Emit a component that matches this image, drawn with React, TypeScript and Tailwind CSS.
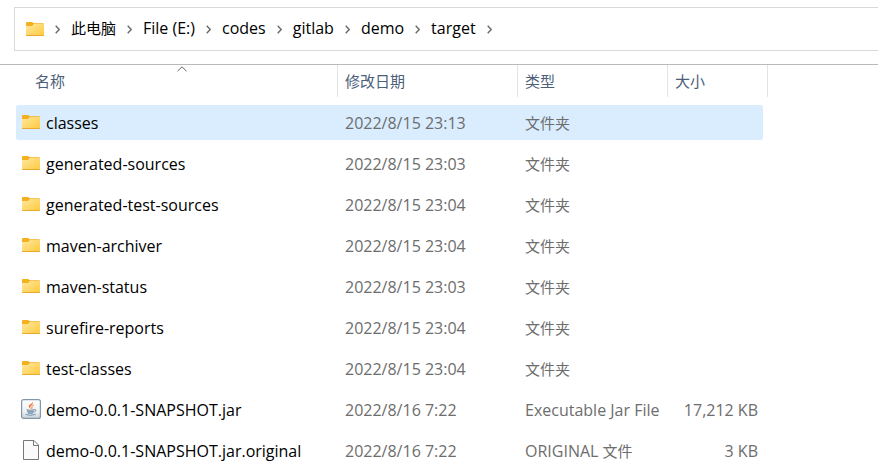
import React from "react";

type Kind = "folder" | "jar" | "file";
type Entry = { name: string; date: string; type: string; size?: string; kind: Kind; selected?: boolean };

const entries: Entry[] = [
  { name: "classes", date: "2022/8/15 23:13", type: "文件夹", kind: "folder", selected: true },
  { name: "generated-sources", date: "2022/8/15 23:03", type: "文件夹", kind: "folder" },
  { name: "generated-test-sources", date: "2022/8/15 23:04", type: "文件夹", kind: "folder" },
  { name: "maven-archiver", date: "2022/8/15 23:04", type: "文件夹", kind: "folder" },
  { name: "maven-status", date: "2022/8/15 23:03", type: "文件夹", kind: "folder" },
  { name: "surefire-reports", date: "2022/8/15 23:04", type: "文件夹", kind: "folder" },
  { name: "test-classes", date: "2022/8/15 23:04", type: "文件夹", kind: "folder" },
  { name: "demo-0.0.1-SNAPSHOT.jar", date: "2022/8/16 7:22", type: "Executable Jar File", size: "17,212 KB", kind: "jar" },
  { name: "demo-0.0.1-SNAPSHOT.jar.original", date: "2022/8/16 7:22", type: "ORIGINAL 文件", size: "3 KB", kind: "file" },
];

const crumbs = ["此电脑", "File (E:)", "codes", "gitlab", "demo", "target"];

// Chinese runs are set one pixel smaller than the Latin text beside them.
function Label({ text }: { text: string }) {
  return (
    <span className="whitespace-pre">
      {text
        .split(/([\u4e00-\u9fff]+)/)
        .filter(Boolean)
        .map((run, i) => (
          <span key={i} className={/[\u4e00-\u9fff]/.test(run) ? "text-[15px]" : "text-[16px]"}>
            {run}
          </span>
        ))}
    </span>
  );
}

function FolderIcon() {
  return (
    <svg width="18" height="14" viewBox="0 0 18 14" className="shrink-0" aria-hidden="true">
      <defs>
        <linearGradient id="folderFace" x1="0" y1="0" x2="1" y2="1">
          <stop offset="0" stopColor="#ffe8a0" />
          <stop offset="1" stopColor="#ffc93c" />
        </linearGradient>
      </defs>
      <path d="M0 1Q0 0 1 0H6L8 1.3H17Q18 1.3 18 2.3V6H0Z" fill="#f5b01f" />
      <path d="M0 4H6L8 2H17.5Q18 2 18 2.5V13Q18 14 17 14H1Q0 14 0 13Z" fill="url(#folderFace)" />
      <path d="M0 13H18Q18 14 17 14H1Q0 14 0 13Z" fill="#e8a92e" />
    </svg>
  );
}

function JarIcon() {
  return (
    <svg width="20" height="20" viewBox="0 0 20 20" className="shrink-0" aria-hidden="true">
      <defs>
        <linearGradient id="jarFace" x1="0" y1="0" x2="0" y2="1">
          <stop offset="0" stopColor="#ffffff" />
          <stop offset="0.65" stopColor="#edf0f2" />
          <stop offset="1" stopColor="#c3d0da" />
        </linearGradient>
      </defs>
      <rect x="0.6" y="0.6" width="18.8" height="18.8" rx="2" fill="url(#jarFace)" stroke="#8397a8" strokeWidth="1.2" />
      <path d="M11.5 2.5C12 5 7 5.6 8 8Q8.5 9.2 9.5 10C9.4 8.3 8.8 8 10 6.7C11.3 5.5 12.4 4.5 11.5 2.5Z" fill="#ef6c25" />
      <path d="M12.8 6C9.5 7.2 11.8 8 10.5 10" fill="none" stroke="#ef7c35" strokeWidth="1" />
      <path d="M5.8 10.7Q9.5 11.8 13 10.7L12.3 14Q9.5 14.8 6.8 14Z" fill="#a9bdcc" />
      <path d="M5.5 10.7Q9.5 11.8 13 10.7M6.2 12.5Q9.5 13.4 12.5 12.5M6.8 14.2Q9.5 15 12.2 14.2M13 10.6Q15.7 10.4 14.8 12Q14 13 12.6 13.2M4.5 15.4Q9.5 17.5 14.7 15.3" fill="none" stroke="#6485a2" strokeWidth="0.8" />
    </svg>
  );
}

function FileIcon() {
  return (
    <svg width="16" height="20" viewBox="0 0 16 20" className="shrink-0" aria-hidden="true">
      <path d="M0.5 0.5H11L15.5 5V19.5H0.5Z" fill="#fafafa" stroke="#777" />
      <path d="M10.5 0.5V5.5H15.5" fill="none" stroke="#777" />
    </svg>
  );
}

function Chevron() {
  return (
    <svg width="5" height="9" viewBox="0 0 5 9" className="shrink-0" aria-hidden="true">
      <path d="M0.7 0.8L4.2 4.5L0.7 8.2" fill="none" stroke="#6a6a6a" strokeWidth="1.4" />
    </svg>
  );
}

function EntryIcon({ kind }: { kind: Kind }) {
  if (kind === "jar") return <JarIcon />;
  if (kind === "file") return <FileIcon />;
  return <FolderIcon />;
}

function HeaderCell({ label, sorted, first }: { label: string; sorted?: boolean; first?: boolean }) {
  return (
    <th scope="col" aria-sort={sorted ? "ascending" : undefined} className="p-0 pb-[2px] font-normal">
      <div className="relative h-8 border-r border-[#e3e3e3]">
        <button type="button" className={`flex h-8 w-full items-center text-left ${first ? "pl-[19px]" : "pl-[7px]"}`}>
          {label}
        </button>
        {sorted && (
          <svg width="10" height="6" viewBox="0 0 10 6" className="absolute top-px left-1/2" aria-hidden="true">
            <path d="M0.5 5.2L5 0.8L9.5 5.2" fill="none" stroke="#666" />
          </svg>
        )}
      </div>
    </th>
  );
}

export default function App() {
  return (
    <main className="bg-white pt-[7px] font-['Open_Sans','Noto_Sans_CJK_SC',sans-serif] text-[15px] leading-5 text-black">
      <nav aria-label="Path" className="ml-[14px] flex h-11 items-center gap-[11px] border-y border-l border-[#d9d9d9] pl-[11px]">
        <FolderIcon />
        <Chevron />
        {crumbs.map((crumb) => (
          <React.Fragment key={crumb}>
            <button type="button" className="pb-[2px] whitespace-nowrap">
              <Label text={crumb} />
            </button>
            <Chevron />
          </React.Fragment>
        ))}
      </nav>
      <section className="mt-[13px] border-t border-[#b9b9b9] pl-4">
        <table className="w-[752px] table-fixed border-collapse text-left">
          <colgroup>
            <col />
            <col className="w-[180px]" />
            <col className="w-[150px]" />
            <col className="w-[100px]" />
          </colgroup>
          <thead className="text-[#4c607a]">
            <tr>
              <HeaderCell label="名称" sorted first />
              <HeaderCell label="修改日期" />
              <HeaderCell label="类型" />
              <HeaderCell label="大小" />
            </tr>
          </thead>
          <tbody className="whitespace-nowrap text-[#6d6d6d]">
            {entries.map((e) => {
              const fill = e.selected ? "bg-[#d9edff]" : "";
              return (
                <tr key={e.name} aria-selected={e.selected}>
                  <td className="p-0 pt-[6px]">
                    <div className={`flex h-[35px] items-center gap-[5px] rounded-l-xs pl-[5px] text-black ${fill}`}>
                      <span className="flex w-5 justify-center pb-[2px]">
                        <EntryIcon kind={e.kind} />
                      </span>
                      <Label text={e.name} />
                    </div>
                  </td>
                  <td className="p-0 pt-[6px]">
                    <div className={`flex h-[35px] items-center pl-[7px] ${fill}`}>
                      <Label text={e.date} />
                    </div>
                  </td>
                  <td className="p-0 pt-[6px]">
                    <div className={`flex h-[35px] items-center pl-[7px] ${fill}`}>
                      <Label text={e.type} />
                    </div>
                  </td>
                  <td className="p-0 pt-[6px]">
                    <div className={`mr-[5px] flex h-[35px] items-center justify-end rounded-r-xs pr-[5px] ${fill}`}>
                      {e.size && <Label text={e.size} />}
                    </div>
                  </td>
                </tr>
              );
            })}
          </tbody>
        </table>
      </section>
    </main>
  );
}
